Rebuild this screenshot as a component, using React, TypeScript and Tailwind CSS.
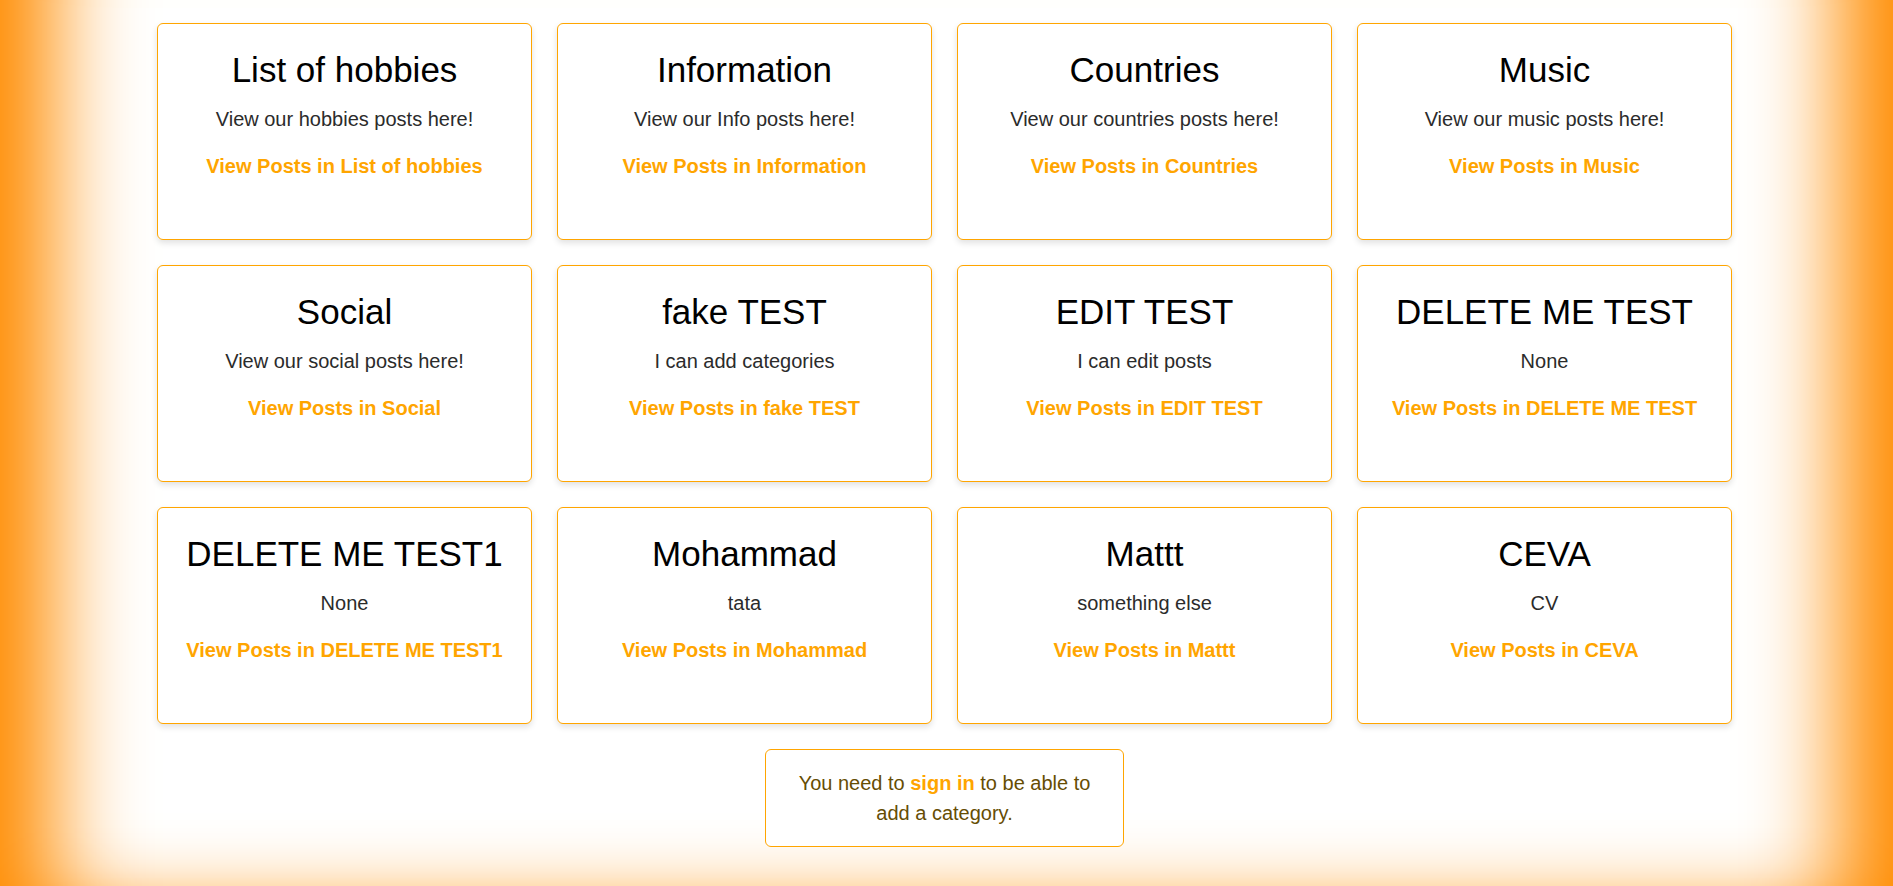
import React from "react";

type Cat = { title: string; desc: string };

const cats: Cat[] = [
  { title: "List of hobbies", desc: "View our hobbies posts here!" },
  { title: "Information", desc: "View our Info posts here!" },
  { title: "Countries", desc: "View our countries posts here!" },
  { title: "Music", desc: "View our music posts here!" },
  { title: "Social", desc: "View our social posts here!" },
  { title: "fake TEST", desc: "I can add categories" },
  { title: "EDIT TEST", desc: "I can edit posts" },
  { title: "DELETE ME TEST", desc: "None" },
  { title: "DELETE ME TEST1", desc: "None" },
  { title: "Mohammad", desc: "tata" },
  { title: "Mattt", desc: "something else" },
  { title: "CEVA", desc: "CV" },
];

function Card({ c }: { c: Cat }) {
  return (
    <div className="box-border h-[217px] w-[375px] rounded-[6px] border border-[#ffa500] bg-white pt-[26px] flex flex-col items-center text-center shadow-[0_3px_6px_rgba(0,0,0,0.12)]">
      <h2 className="text-[35px] leading-[40px] text-black font-normal">{c.title}</h2>
      <p className="mt-[18px] text-[20px] leading-[23px] text-[#2b2b2b]">{c.desc}</p>
      <a href="#" className="mt-[24px] text-[20px] leading-[23px] font-bold text-[#ffa500] no-underline">
        View Posts in {c.title}
      </a>
    </div>
  );
}

export default function App() {
  return (
    <div
      className="min-h-screen bg-white shadow-[inset_155px_0_90px_-100px_#ff8c00,inset_-155px_0_90px_-100px_#ff8c00,inset_0_-78px_80px_-100px_#ff8c00]"
      style={{ fontFamily: '"Liberation Sans", Arial, sans-serif' }}
    >
      <div className="flex flex-col items-center pt-[23px] pr-[4px]">
        <div className="grid grid-cols-[repeat(4,375px)] gap-[25px]">
          {cats.map((c) => (
            <Card key={c.title} c={c} />
          ))}
        </div>
        <div className="mt-[25px] box-border w-[359px] rounded-[6px] border border-[#ffa500] bg-white px-[24px] py-[18px] text-center text-[20px] leading-[30px] text-[#664d03]">
          You need to{" "}
          <a href="#" className="font-bold text-[#ffa500] no-underline">
            sign in
          </a>{" "}
          to be able to add a category.
        </div>
      </div>
    </div>
  );
}
